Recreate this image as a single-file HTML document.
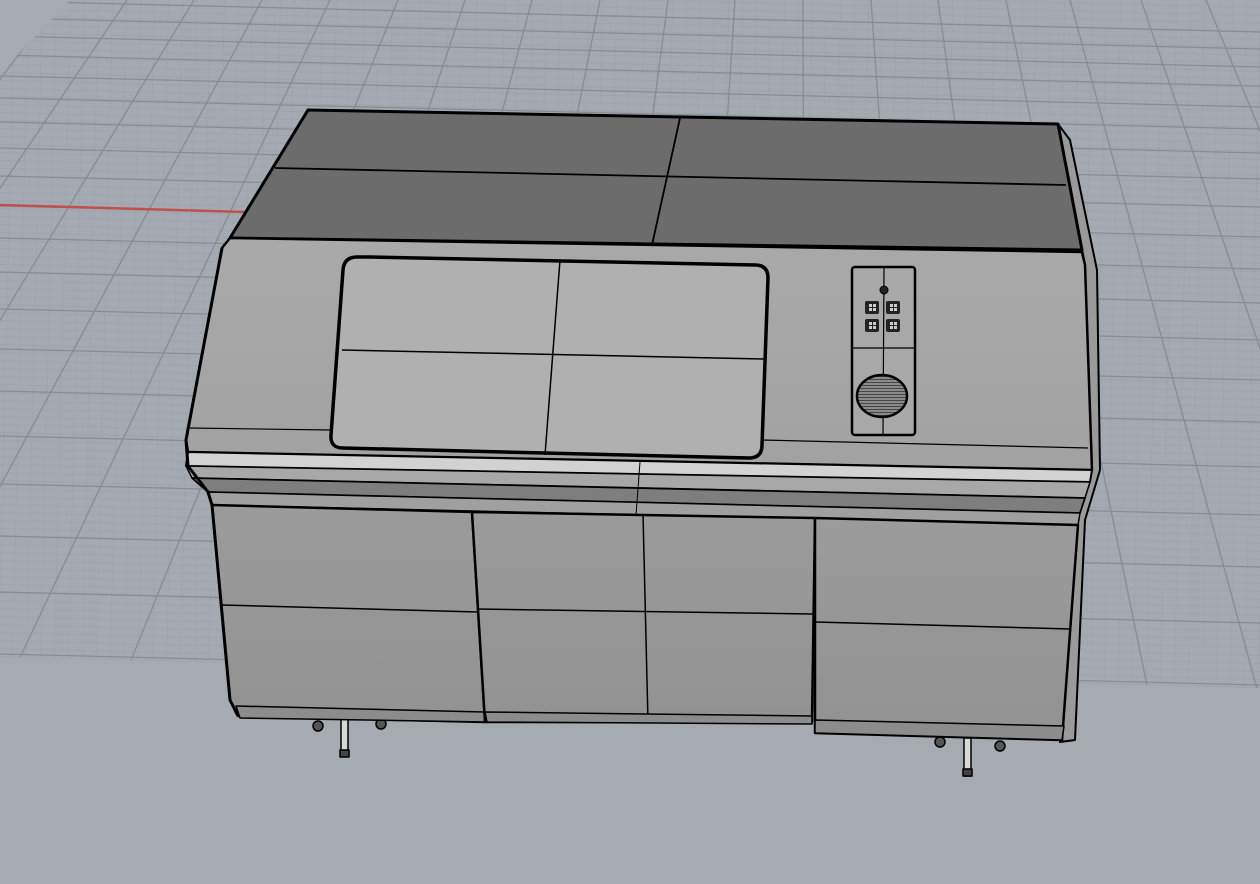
<!DOCTYPE html>
<html><head><meta charset="utf-8"><style>
html,body{margin:0;padding:0;background:#a6abb1;width:1260px;height:884px;overflow:hidden}
svg{display:block}
</style></head><body>
<svg width="1260" height="884" viewBox="0 0 1260 884" xmlns="http://www.w3.org/2000/svg">
<defs>
<clipPath id="gc"><polygon points="70,0 1260,0 1260,688 0,657 0,73"/></clipPath>
<pattern id="minor" width="14" height="8" patternUnits="userSpaceOnUse" patternTransform="rotate(1.4)"><rect width="14" height="8" fill="#a5aab2"/><path d="M0 0.5H14M0.5 0V8" stroke="#9ca1a9" stroke-width="0.7"/></pattern>
<linearGradient id="fr" x1="0" y1="0" x2="0" y2="1"><stop offset="0" stop-color="#a9a9a9"/><stop offset="1" stop-color="#a2a2a2"/></linearGradient>
<linearGradient id="lo" x1="0" y1="0" x2="0" y2="1"><stop offset="0" stop-color="#9b9b9b"/><stop offset="1" stop-color="#929292"/></linearGradient>
<pattern id="hatch" width="3" height="3" patternUnits="userSpaceOnUse"><rect width="3" height="3" fill="#8a8a8a"/><path d="M0 1.5H3" stroke="#333" stroke-width="0.8"/></pattern>
</defs>
<rect width="1260" height="884" fill="#a6abb1"/>
<g clip-path="url(#gc)">
<rect width="1260" height="700" fill="url(#minor)"/>
<g stroke="#878c93" stroke-width="1.3">
<line x1="0" y1="1" x2="1260" y2="32"/>
<line x1="0" y1="18" x2="1260" y2="49"/>
<line x1="0" y1="36" x2="1260" y2="67"/>
<line x1="0" y1="55" x2="1260" y2="86"/>
<line x1="0" y1="76" x2="1260" y2="107"/>
<line x1="0" y1="98" x2="1260" y2="129"/>
<line x1="0" y1="122" x2="1260" y2="153"/>
<line x1="0" y1="148" x2="1260" y2="179"/>
<line x1="0" y1="176" x2="1260" y2="207"/>
<line x1="0" y1="206" x2="1260" y2="237"/>
<line x1="0" y1="238" x2="1260" y2="269"/>
<line x1="0" y1="272" x2="1260" y2="303"/>
<line x1="0" y1="309" x2="1260" y2="340"/>
<line x1="0" y1="349" x2="1260" y2="380"/>
<line x1="0" y1="391" x2="1260" y2="422"/>
<line x1="0" y1="436" x2="1260" y2="467"/>
<line x1="0" y1="484" x2="1260" y2="515"/>
<line x1="0" y1="536" x2="1260" y2="567"/>
<line x1="0" y1="592" x2="1260" y2="623"/>
<line x1="0" y1="654" x2="1260" y2="685"/>
<line x1="59" y1="0" x2="-460" y2="700"/>
<line x1="127" y1="0" x2="-345" y2="700"/>
<line x1="194" y1="0" x2="-230" y2="700"/>
<line x1="262" y1="0" x2="-115" y2="700"/>
<line x1="330" y1="0" x2="0" y2="700"/>
<line x1="398" y1="0" x2="115" y2="700"/>
<line x1="465" y1="0" x2="230" y2="700"/>
<line x1="532" y1="0" x2="345" y2="700"/>
<line x1="600" y1="0" x2="460" y2="700"/>
<line x1="668" y1="0" x2="575" y2="700"/>
<line x1="735" y1="0" x2="690" y2="700"/>
<line x1="803" y1="0" x2="805" y2="700"/>
<line x1="871" y1="0" x2="920" y2="700"/>
<line x1="938" y1="0" x2="1035" y2="700"/>
<line x1="1006" y1="0" x2="1150" y2="700"/>
<line x1="1070" y1="0" x2="1260" y2="700"/>
<line x1="1141" y1="0" x2="1380" y2="700"/>
<line x1="1206" y1="0" x2="1495" y2="700"/>
</g>
</g>
<line x1="0" y1="205" x2="245" y2="212" stroke="#c0504d" stroke-width="2.5"/>

<g stroke="#000" stroke-linejoin="round">
<g stroke-width="1.5">
<rect x="341" y="718" width="7" height="38" fill="#d8d8d8"/><rect x="340" y="750" width="9" height="7" fill="#444"/>
<circle cx="318" cy="726" r="5" fill="#555"/><circle cx="381" cy="724" r="5" fill="#555"/>
<rect x="964" y="738" width="7" height="38" fill="#d8d8d8"/><rect x="963" y="769" width="9" height="7" fill="#444"/>
<circle cx="940" cy="742" r="5" fill="#555"/><circle cx="1000" cy="746" r="5" fill="#555"/>
</g>
<polygon points="1058,124 1070,140 1097,270 1100,470 1085,520 1075,740 1060,742 1068,528 1080,510 1092,470 1085,265" fill="#9a9a9a" stroke-width="2"/>
<polygon points="308,110 1058,124 1082,250 230,238" fill="#6c6c6c" stroke-width="3"/>
<path d="M275,168 L1066,185 M680,118 L652,245" stroke-width="1.8" fill="none"/>
<polygon points="230,238 1082,252 1085,265 1092,470 188,452 186,440 222,248" fill="url(#fr)" stroke-width="2.5"/>
<path d="M190,428 L330,430 M762,440 L1088,448" stroke-width="1.2" fill="none"/>
<path d="M370,257 L755,265 Q768,265 768,278 L762,445 Q762,458 749,458 L343,448 Q330,448 331,435 L343,270 Q344,257 357,257 Z" fill="#b0b0b0" stroke-width="3.5"/>
<path d="M560,260 L545,455 M342,350 L765,359" stroke-width="1.5" fill="none"/>
<rect x="852" y="267" width="63" height="168" rx="3" fill="#a8a8a8" stroke-width="2.5"/>
<path d="M884,268 L883,434 M853,348 L914,348" stroke-width="1.2" fill="none"/>
<circle cx="884" cy="290" r="4" fill="#222"/>
<g fill="#222" stroke="none">
<rect x="865" y="301" width="14" height="13" rx="2"/><rect x="886" y="301" width="14" height="13" rx="2"/>
<rect x="865" y="319" width="14" height="13" rx="2"/><rect x="886" y="319" width="14" height="13" rx="2"/>
</g>
<g fill="#ccc" stroke="none">
<rect x="869" y="304" width="3" height="3"/><rect x="873" y="304" width="3" height="3"/><rect x="869" y="308" width="3" height="3"/><rect x="873" y="308" width="3" height="3"/>
<rect x="890" y="304" width="3" height="3"/><rect x="894" y="304" width="3" height="3"/><rect x="890" y="308" width="3" height="3"/><rect x="894" y="308" width="3" height="3"/>
<rect x="869" y="322" width="3" height="3"/><rect x="873" y="322" width="3" height="3"/><rect x="869" y="326" width="3" height="3"/><rect x="873" y="326" width="3" height="3"/>
<rect x="890" y="322" width="3" height="3"/><rect x="894" y="322" width="3" height="3"/><rect x="890" y="326" width="3" height="3"/><rect x="894" y="326" width="3" height="3"/>
</g>
<ellipse cx="882" cy="396" rx="25" ry="21" fill="url(#hatch)" stroke-width="2.5"/>
<polygon points="188,452 1092,470 1090,482 186,466" fill="#d2d2d2" stroke-width="2"/>
<polygon points="186,466 1090,482 1085,498 192,478" fill="#a8a8a8" stroke-width="1.5"/>
<polygon points="192,478 1085,498 1080,513 208,492" fill="#7e7e7e" stroke-width="1.8"/>
<polygon points="208,492 1080,513 1078,525 212,505" fill="#a0a0a0" stroke-width="1.5"/>
<path d="M640,462 L636,515" stroke-width="1" fill="none"/>
<polygon points="212,505 472,512 485,722 238,716 230,700" fill="url(#lo)" stroke-width="2.5"/>
<path d="M222,605 L478,612" stroke-width="1.5" fill="none"/>
<polygon points="236,706 484,712 486,722 240,718" fill="#8c8c8c" stroke-width="1.5"/>
<polygon points="472,512 815,518 812,722 485,722" fill="url(#lo)" stroke-width="2.5"/>
<path d="M478,609 L813,614 M643,514 L648,722" stroke-width="1.5" fill="none"/>
<polygon points="485,712 812,716 812,724 487,722" fill="#8c8c8c" stroke-width="1.5"/>
<polygon points="815,518 1078,525 1062,740 815,733" fill="url(#lo)" stroke-width="2.5"/>
<path d="M815,622 L1070,629" stroke-width="1.5" fill="none"/>
<polygon points="815,720 1064,726 1062,740 815,733" fill="#8c8c8c" stroke-width="1.5"/>
<path d="M222,248 L186,440 L188,466 L208,492 L212,505 L230,700 L238,716" stroke-width="3" fill="none"/>
</g>
</svg>
</body></html>
